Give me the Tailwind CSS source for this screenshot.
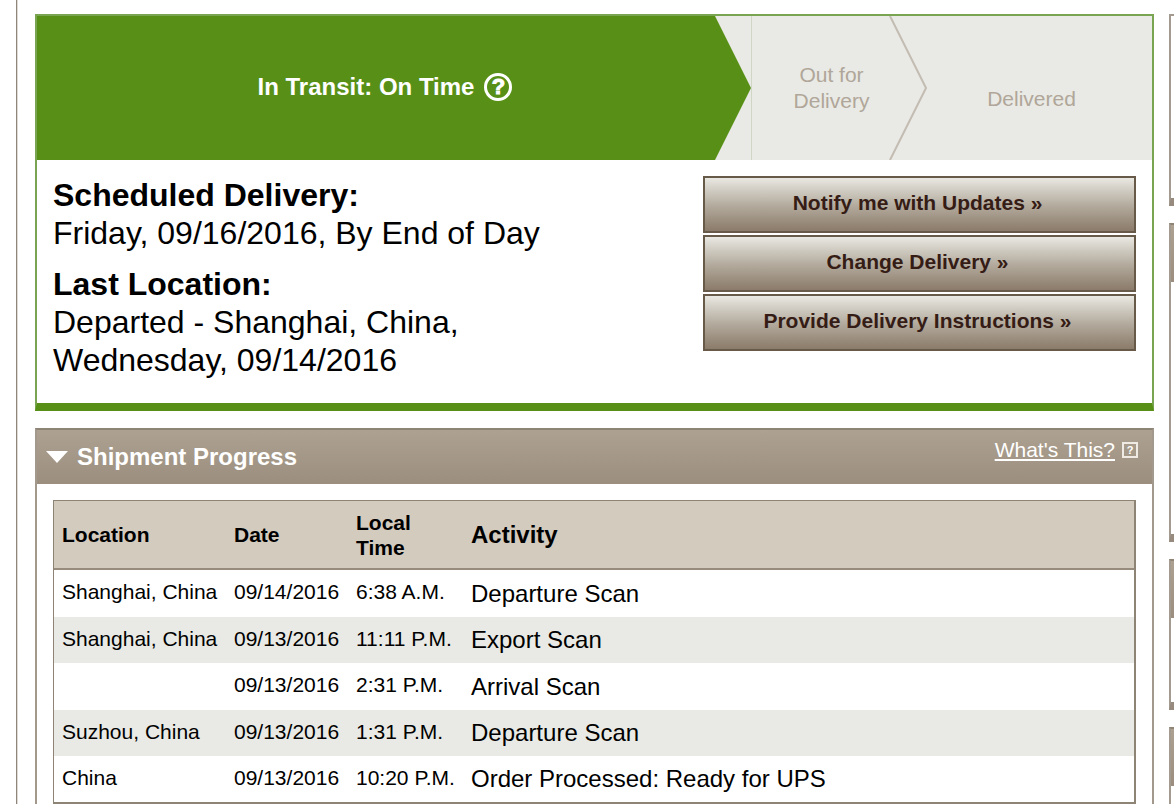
<!DOCTYPE html>
<html lang="en">
<head>
    <meta charset="UTF-8">
    <meta name="viewport" content="width=device-width, initial-scale=1.0">
    <title>Tracking Detail</title>
    <script src="https://cdn.jsdelivr.net/npm/@tailwindcss/browser@4"></script>
</head>
<body class="bg-white pl-4 text-black font-['Liberation_Sans',Arial,sans-serif]">
    <div class="flex min-h-screen border-l border-[#8f857b] pt-[14px] pl-[18px] shadow-[inset_1px_0_0_#dedad5]">

        <main class="flex min-w-0 flex-1 flex-col gap-[17px]">
            <!-- Status summary -->
            <section class="border-2 border-b-8 border-[#79a552] border-b-[#589017]">
                <div class="flex h-36 bg-[#e9eae5]">
                    <div class="flex flex-1">
                        <div class="flex flex-1 items-center justify-center gap-[10px] bg-[#589017] pb-[2px] pl-[18px] text-2xl font-bold text-white">
                            <span>In Transit: On Time</span>
                            <button type="button" aria-label="Status help" class="flex size-7 items-center justify-center rounded-full border-3 border-white text-[22px] leading-none font-bold [-webkit-text-stroke:1px_#fff]">?</button>
                        </div>
                        <svg class="h-36 w-9 shrink-0" viewBox="0 0 36 144" aria-hidden="true">
                            <path d="M0 0L36 72L0 144Z" fill="#589017"/>
                        </svg>
                    </div>
                    <div class="relative flex w-40 items-center justify-center border-l border-[#cfd6c4] text-center text-[21px] leading-[26px] text-[#b0a699]">
                        <span>Out for<br>Delivery</span>
                        <svg class="absolute top-0 -right-4 h-36 w-[38px]" viewBox="0 0 38 144" fill="none" aria-hidden="true">
                            <path d="M1 0L37 72L1 144" stroke="#c2bcb2" stroke-width="2"/>
                        </svg>
                    </div>
                    <div class="flex w-[241px] items-center justify-center pt-[22px] text-[21px] leading-[26px] text-[#b0a699]">Delivered</div>
                </div>

                <div class="flex justify-between gap-4 px-4 pt-4 pb-6">
                    <dl class="text-[32px] leading-[38px]">
                        <dt class="font-bold">Scheduled Delivery:</dt>
                        <dd class="mb-[13px]">Friday, 09/16/2016, By End of Day</dd>
                        <dt class="font-bold">Last Location:</dt>
                        <dd>Departed - Shanghai, China,<br>Wednesday, 09/14/2016</dd>
                    </dl>
                    <div class="flex w-[433px] shrink-0 flex-col gap-[2px] text-[21px] font-bold text-[#351c15]">
                        <button type="button" class="h-[57px] border-2 border-[#675a49] bg-linear-to-b from-[#e9e8e2] via-[#b5ada0] to-[#8b7b6a] pr-1 pb-1">Notify me with Updates »</button>
                        <button type="button" class="h-[57px] border-2 border-[#675a49] bg-linear-to-b from-[#e9e8e2] via-[#b5ada0] to-[#8b7b6a] pr-1 pb-1">Change Delivery »</button>
                        <button type="button" class="h-[57px] border-2 border-[#675a49] bg-linear-to-b from-[#e9e8e2] via-[#b5ada0] to-[#8b7b6a] pr-1 pb-1">Provide Delivery Instructions »</button>
                    </div>
                </div>
            </section>

            <!-- Shipment progress -->
            <section class="flex-1 border-2 border-b-0 border-[#a2988b] border-t-[#8e8476]">
                <header class="flex h-[54px] justify-between bg-linear-to-b from-[#ada191] to-[#9b8e7e] pr-[14px] pl-[9px] text-white">
                    <button type="button" class="flex items-center gap-[9px] text-2xl font-bold">
                        <svg class="h-3 w-[22px]" viewBox="0 0 22 12" aria-hidden="true">
                            <path d="M0 0H22L11 12Z" fill="#fff"/>
                        </svg>
                        Shipment Progress
                    </button>
                    <div class="flex items-start gap-[7px] pt-2">
                        <a href="#" class="text-[21px] leading-6 underline">What's This?</a>
                        <button type="button" aria-label="Shipment progress help" class="mt-1 flex size-4 items-center justify-center border-2 border-[#efebe4] text-[11px] leading-none font-bold">?</button>
                    </div>
                </header>

                <div class="px-4 pt-4">
                    <table class="w-full table-fixed border-separate border-spacing-0 border border-r-2 border-b-2 border-[#8e8476] text-left text-[21px] leading-[25px]">
                        <colgroup>
                            <col class="w-[172px]">
                            <col class="w-[122px]">
                            <col class="w-[115px]">
                            <col>
                        </colgroup>
                        <thead class="bg-[#d4cbbf]">
                            <tr class="h-[69px]">
                                <th class="border-b-2 border-[#968b7d] px-2">Location</th>
                                <th class="border-b-2 border-[#968b7d] px-2">Date</th>
                                <th class="border-b-2 border-[#968b7d] px-2">Local<br>Time</th>
                                <th class="border-b-2 border-[#968b7d] px-2 text-2xl">Activity</th>
                            </tr>
                        </thead>
                        <tbody class="whitespace-nowrap">
                            <tr class="h-[47px]">
                                <td class="px-2 pb-1">Shanghai, China</td>
                                <td class="px-2 pb-1">09/14/2016</td>
                                <td class="px-2 pb-1">6:38 A.M.</td>
                                <td class="px-2 text-2xl">Departure Scan</td>
                            </tr>
                            <tr class="h-[46px] bg-[#e9eae5]">
                                <td class="px-2 pb-1">Shanghai, China</td>
                                <td class="px-2 pb-1">09/13/2016</td>
                                <td class="px-2 pb-1">11:11 P.M.</td>
                                <td class="px-2 text-2xl">Export Scan</td>
                            </tr>
                            <tr class="h-[47px]">
                                <td class="px-2 pb-1"></td>
                                <td class="px-2 pb-1">09/13/2016</td>
                                <td class="px-2 pb-1">2:31 P.M.</td>
                                <td class="px-2 text-2xl">Arrival Scan</td>
                            </tr>
                            <tr class="h-[46px] bg-[#e9eae5]">
                                <td class="px-2 pb-1">Suzhou, China</td>
                                <td class="px-2 pb-1">09/13/2016</td>
                                <td class="px-2 pb-1">1:31 P.M.</td>
                                <td class="px-2 text-2xl">Departure Scan</td>
                            </tr>
                            <tr class="h-[46px]">
                                <td class="px-2 pb-1">China</td>
                                <td class="px-2 pb-1">09/13/2016</td>
                                <td class="px-2 pb-1">10:20 P.M.</td>
                                <td class="px-2 text-2xl">Order Processed: Ready for UPS</td>
                            </tr>
                        </tbody>
                    </table>
                </div>
            </section>
        </main>

        <!-- Side panels, cut off by the window edge -->
        <aside class="ml-[15px] flex w-[5px] shrink-0 flex-col gap-[17px]">
            <div class="h-48 border-t-2 border-b-8 border-l-2 border-[#a39a90] border-b-[#968b7e]"></div>
            <div class="h-[319px] border-t-2 border-b-8 border-l-2 border-[#a39a90] border-t-[#8e8476] border-b-[#968b7e]">
                <div class="h-[57px] bg-linear-to-b from-[#ada191] to-[#9b8e7e]"></div>
            </div>
            <div class="h-[151px] border-t-2 border-b-8 border-l-2 border-[#a39a90] border-t-[#8e8476] border-b-[#968b7e]">
                <div class="h-[57px] bg-linear-to-b from-[#ada191] to-[#9b8e7e]"></div>
            </div>
            <div class="flex-1 border-t-2 border-l-2 border-[#a39a90] border-t-[#8e8476]">
                <div class="h-[57px] bg-linear-to-b from-[#ada191] to-[#9b8e7e]"></div>
            </div>
        </aside>
    </div>
</body>
</html>
